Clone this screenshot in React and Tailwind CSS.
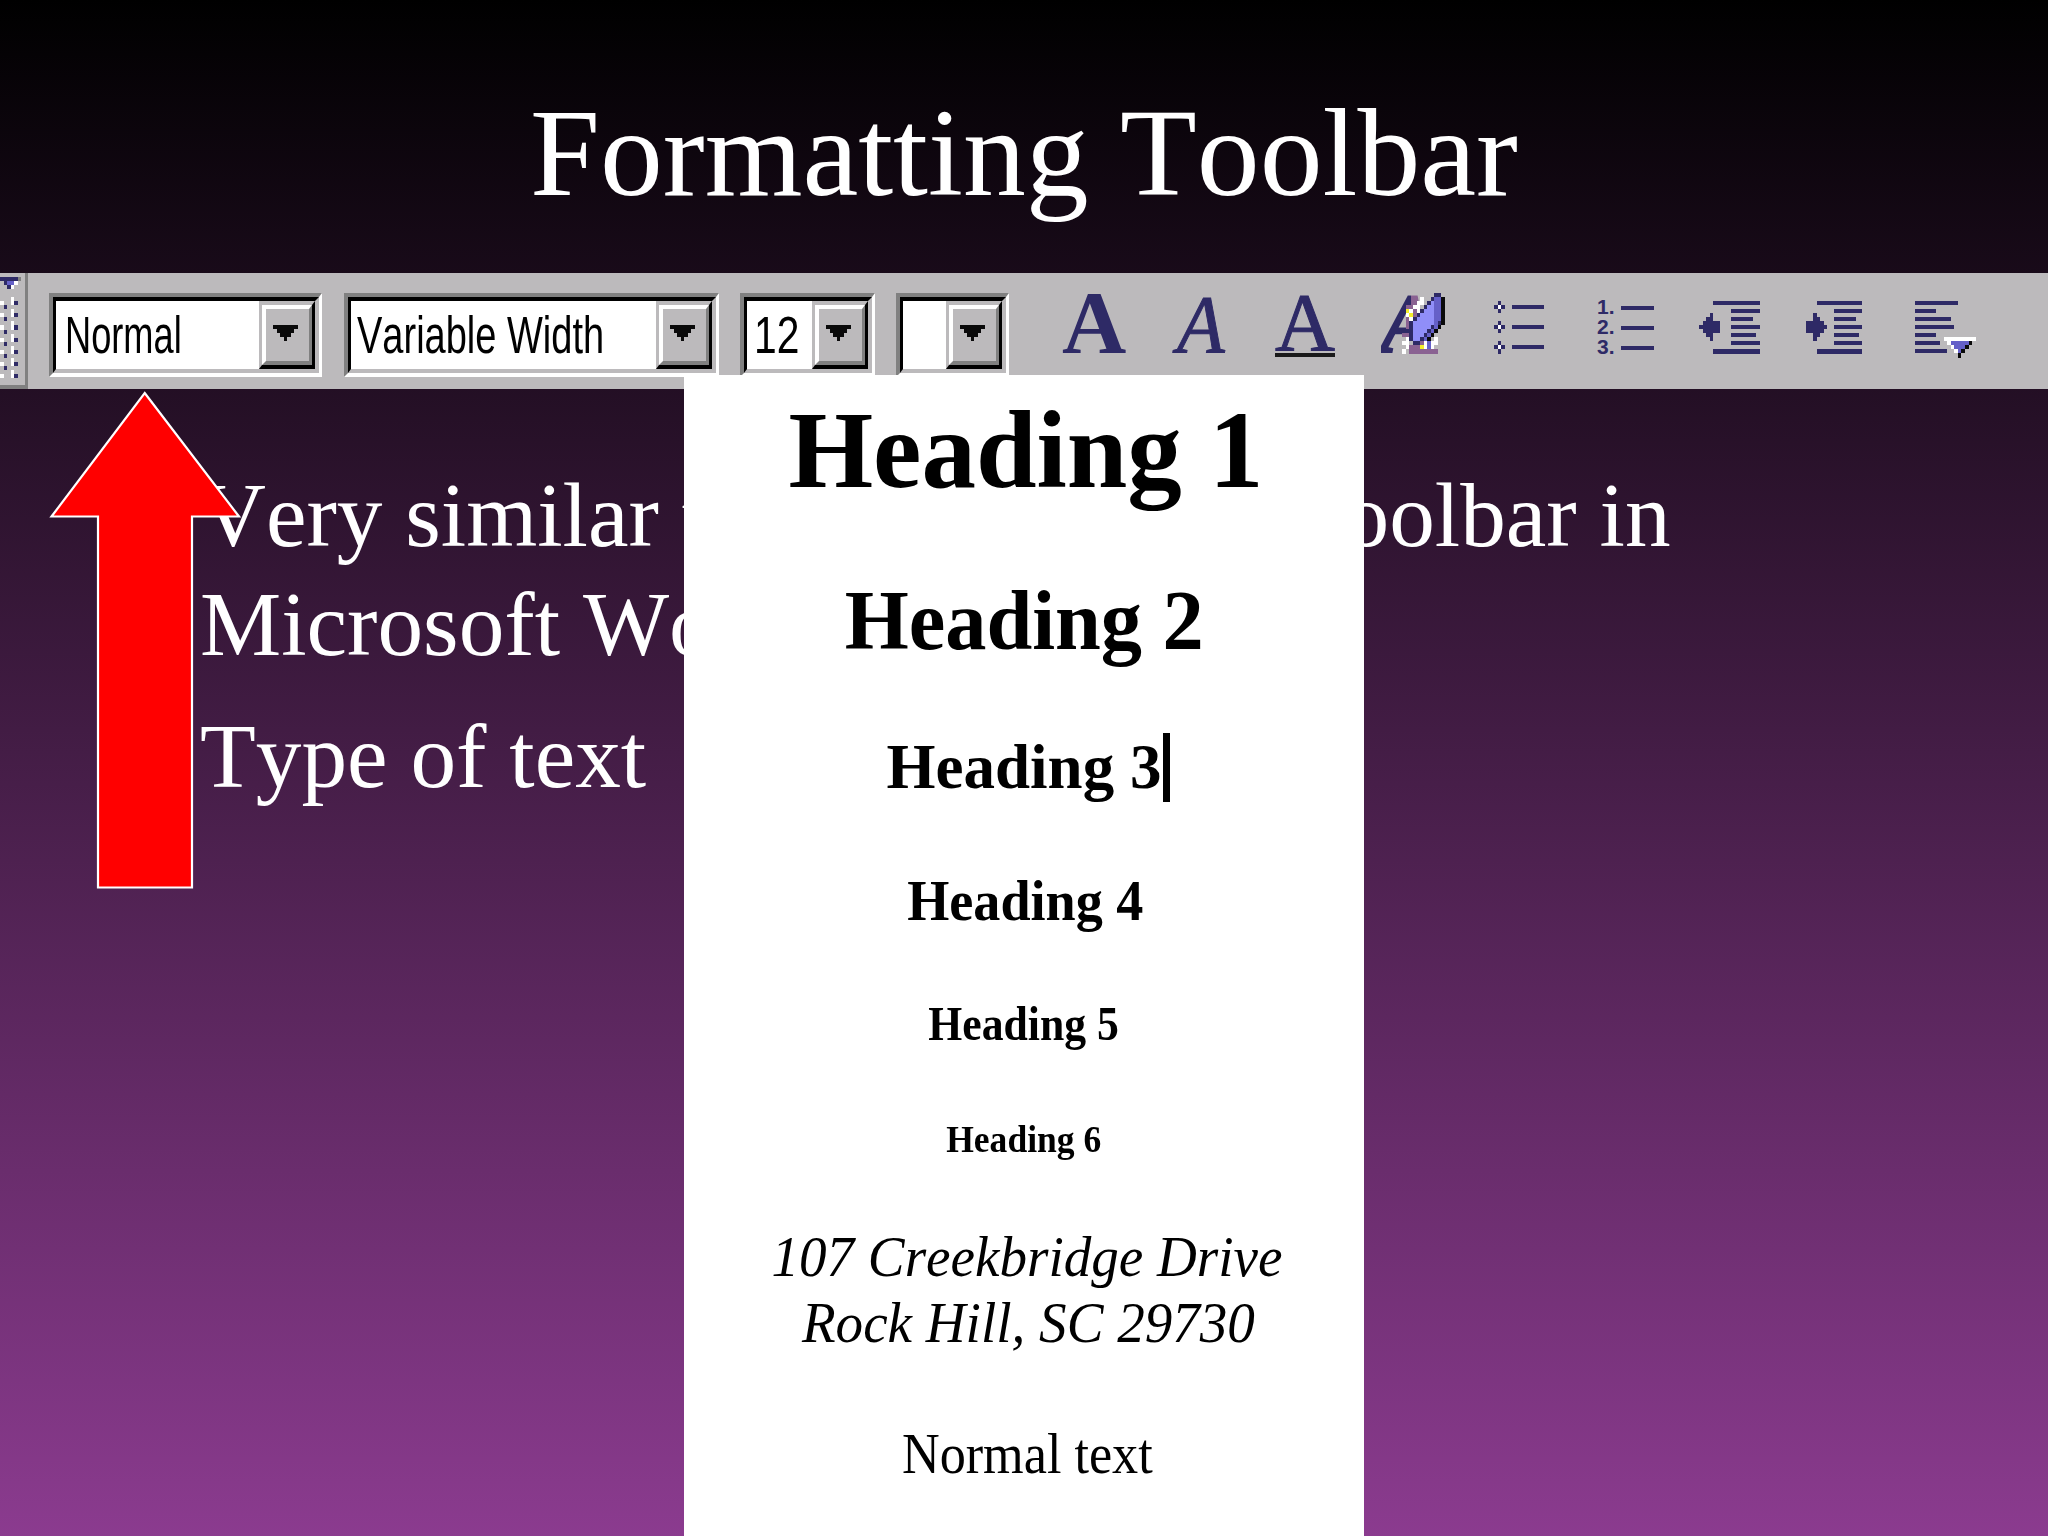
import React from 'react';

const palette = {
  n: '#2e2a66',
  m: '#6560c8',
  l: '#908ef8',
  p: '#8a6292',
  y: '#f4ee2a',
  w: '#ffffff',
  k: '#0a0a0a',
  g: '#808080',
};

const grip = [
  'nnnnng', '.nmmw.', '..nw..', '......', '......',
  '...w..', 'w..wn.', '.n....', '...w..', 'w..wn.', '.n....', '...w..', 'w..wn.', '.n....', '...w..',
  'w..wn.', '.n....', '...w..', 'w..wn.', '.n....', '...w..', 'w..wn.', '.n....', '...w..', 'w..wn.',
];

const caret = ['kkkkkkk', '.kkkkk.', '..kkk..', '...k...'];

const eraser = [
  '...............nn.',
  '...........w..nmmk',
  '.......n..ww.nlmmk',
  '.......ppww.nllmmk',
  '.......ywpwnlllmmk',
  '.......wypnllllmmk',
  '.......pwnlllllmmk',
  '.......pnllllllmnk',
  '.......pnlllllnmk.',
  '........nllllnmk..',
  '......ppnlllnmk...',
  '.......wnllnmk.w..',
  '......ww.nnpwmww..',
  '.......wpppywmw...',
  '......w.pppppppp..',
];

const bullets = [
  '.n............', 'nwn..nnnnnnnnn', '.n............', '..............', '..............',
  '.n............', 'nwn..nnnnnnnnn', '.n............', '..............', '..............',
  '.n............', 'nwn..nnnnnnnnn', '.n............',
];

const outdent = [
  '....nnnnnnnnnnnnn',
  '.................',
  '.........nnnnnnnn',
  '...n.............',
  '..nn.....nnnnnn..',
  '.nnnnn...........',
  'nnnnnn...nnnnnnnn',
  '.nnnnn...........',
  '..nn.....nnnnnnn.',
  '...n.............',
  '.........nnnnnnnn',
  '.................',
  '....nnnnnnnnnnnnn',
];

const indent = [
  '...nnnnnnnnnnnnn',
  '................',
  '........nnnnnnnn',
  '..n.............',
  '..nn....nnnnnn..',
  'nnnnn...........',
  'nnnnnn..nnnnnnnn',
  'nnnnn...........',
  '..nn....nnnnnnn.',
  '..n.............',
  '........nnnnnnnn',
  '................',
  '...nnnnnnnnnnnnn',
];

const align = [
  'nnnnnnnnnnnn.....',
  '.................',
  'nnnnnn...........',
  '.................',
  'nnnnnnnnnn.......',
  '.................',
  'nnnnnnnnnnn......',
  '.................',
  'nnnnnn...........',
  '........wwwwwwwww',
  'nnnnnnn..wmmmmmk.',
  '..........wmmmk..',
  'nnnnnnnnn..wmk...',
  '............k....',
];

function Pixels({ rows, className }) {
  return (
    <svg viewBox={`0 0 ${rows[0].length} ${rows.length}`} preserveAspectRatio="none" shapeRendering="crispEdges" className={className}>
      {rows.flatMap((row, y) =>
        [...row].map((c, x) => palette[c] && <rect key={`${x}-${y}`} x={x} y={y} width="1" height="1" fill={palette[c]} />)
      )}
    </svg>
  );
}

function Combo({ label, className, labelClass }) {
  return (
    <div className={`h-[84px] shrink-0 border-y-4 border-l-4 border-r-[3px] border-t-[#808080] border-l-[#808080] border-b-white border-r-white ${className}`}>
      <div className="flex h-full border-t-4 border-b-4 border-l-[3px] border-r-4 border-t-black border-l-black border-b-[#bcbabc] border-r-[#bcbabc] bg-white">
        <div className="min-w-0 flex-1">
          <span className={`block w-max origin-left whitespace-nowrap text-[51px] leading-[70px] text-black ${labelClass}`}>{label}</span>
        </div>
        <div className="w-[56px] border-y-4 border-l-[3px] border-r-[3px] border-t-[#bcbabc] border-l-[#bcbabc] border-b-black border-r-black">
          <div className="h-full border-y-4 border-l-4 border-r-[3px] border-t-white border-l-white border-b-[#808080] border-r-[#808080] bg-[#bcbabc] pt-4 pl-[7px]">
            <Pixels rows={caret} className="h-4 w-[25px]" />
          </div>
        </div>
      </div>
    </div>
  );
}

const samples = [
  { text: 'Heading 1', style: 'mt-[20px] ml-[3px] text-[110px] font-bold scale-x-[0.99]' },
  { text: 'Heading 2', style: 'mt-[74px] text-[84px] font-bold scale-x-[0.98]' },
  { text: 'Heading 3', style: 'mt-[73px] text-[63px] font-bold', cursor: true },
  { text: 'Heading 4', style: 'mt-[73px] ml-[3px] text-[57px] font-bold scale-x-[0.95]' },
  { text: 'Heading 5', style: 'mt-[72px] text-[47.5px] font-bold scale-x-[0.92]' },
  { text: 'Heading 6', style: 'mt-[72px] text-[37px] font-bold scale-x-[0.96]' },
  { text: '107 Creekbridge Drive', style: 'mt-[70px] ml-[6px] text-[58px] italic scale-x-[0.95]' },
  { text: 'Rock Hill, SC 29730', style: 'mt-[8px] ml-[8px] text-[58px] italic scale-x-[0.95]' },
  { text: 'Normal text', style: 'mt-[73px] ml-[6px] text-[58px] scale-x-[0.9]' },
];

export default function App() {
  return (
    <div className="relative flex h-[1536px] w-[2048px] flex-col overflow-hidden bg-[linear-gradient(to_bottom,#000000,#8b3b8f)] font-['Liberation_Serif',serif] text-white [font-kerning:none]">
      <h1 className="h-[273px] pt-[90px] text-center text-[125.7px] leading-none">Formatting Toolbar</h1>

      <div className="flex h-[116px] shrink-0 items-start bg-[#bcbabc] font-['Liberation_Sans',sans-serif] text-[#2e2a66]">
        <div className="h-[116px] w-7 shrink-0 border-r-[3px] border-b-4 border-[#808080] pt-1">
          <Pixels rows={grip} className="h-[101px] w-[21.4px]" />
        </div>
        <div className="flex pt-5 pl-[21px]">
          <Combo label="Normal" className="w-[273px]" labelClass="ml-[9px] scale-x-[0.71]" />
          <Combo label="Variable Width" className="ml-[22px] w-[375px]" labelClass="ml-[6px] scale-x-[0.745]" />
          <Combo label="12" className="ml-[21px] w-[135px]" labelClass="ml-[7px] scale-x-[0.8]" />
          <Combo label="" className="ml-[21px] w-[113px]" labelClass="" />
        </div>
        <div className="flex pt-5 font-['Liberation_Serif',serif] leading-none">
          <span className="-mt-[15px] ml-[53px] w-[64px] text-[89px] font-bold">A</span>
          <span className="-mt-[10px] ml-[51px] w-[50px] origin-left scale-x-[0.94] text-[83px] italic [-webkit-text-stroke:1px_#2e2a66]">A</span>
          <div className="ml-[48px] h-[64px] w-[60px] border-b-4 border-[#1a1a1a]">
            <span className="-mt-[12px] block text-[83px] [-webkit-text-stroke:1px_#2e2a66]">A</span>
          </div>
          <div className="relative ml-[46px] h-[61px] w-[64px]">
            <span className="-mt-[10px] block w-[64px] bg-[linear-gradient(to_right,#2e2a66_30px,#8a6292_30px)] bg-clip-text text-[82px] text-transparent italic [-webkit-text-stroke:3px_transparent]">A</span>
            <Pixels rows={eraser} className="absolute top-0 left-0 h-[60.5px] w-[64px]" />
          </div>
          <Pixels rows={bullets} className="mt-2 ml-[49px] h-[52.5px] w-[50px]" />
          <div className="mt-1 ml-[53px] flex w-[57px] flex-col">
            {['1.', '2.', '3.'].map((n) => (
              <div key={n} className="flex h-5 items-center justify-between">
                <span className="origin-left font-['Liberation_Sans',sans-serif] text-[21px] leading-[18px] font-bold">{n}</span>
                <span className="mt-[1px] h-1 w-[33px] bg-[#2e2a66]" />
              </div>
            ))}
          </div>
          <Pixels rows={outdent} className="mt-2 ml-[45px] h-[52.5px] w-[60.7px]" />
          <Pixels rows={indent} className="mt-2 ml-[46px] h-[52.5px] w-[56.7px]" />
          <Pixels rows={align} className="mt-2 ml-[52.5px] h-[56.5px] w-[60.7px]" />
        </div>
      </div>

      <div className="pt-[72px] pl-[200px] text-[91.3px] leading-[109px]">
        <p>
          Very similar to the formatting toolbar in
          <br />
          Microsoft Word
        </p>
        <p className="mt-[23px]">Type of text</p>
      </div>

      {/* style samples dropped down over the slide */}
      <div className="absolute top-[375px] left-[684px] flex h-[1161px] w-[680px] flex-col items-center bg-white text-black">
        {samples.map(({ text, style, cursor }) => (
          <div key={text} className={`relative leading-none whitespace-nowrap ${style}`}>
            {text}
            {cursor && <span className="absolute -top-[3px] -right-[9px] h-[69px] w-[7px] bg-black" />}
          </div>
        ))}
      </div>

      <svg viewBox="0 0 200 510" className="absolute top-[385px] left-[45px] h-[510px] w-[200px]">
        <path d="M99.7 8 L194 131.5 H147 V502.5 H53 V131.5 H6.5 Z" fill="#ff0000" stroke="#ffffff" strokeWidth="2.2" />
      </svg>
    </div>
  );
}
